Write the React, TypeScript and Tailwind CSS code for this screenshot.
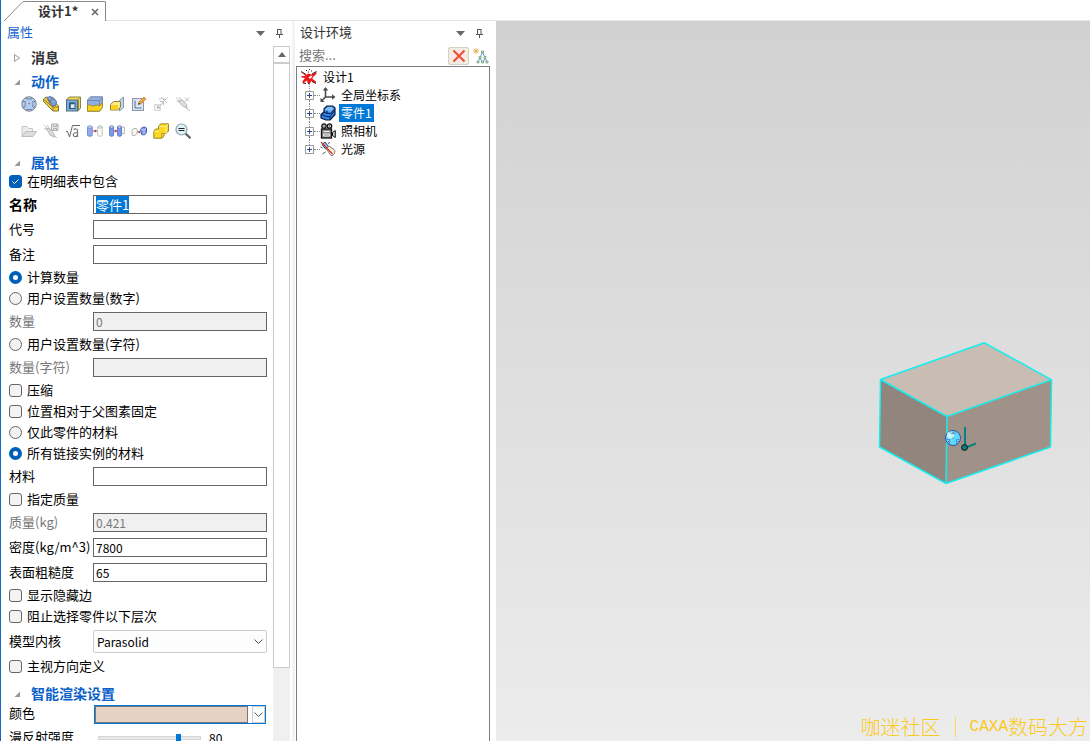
import { useEffect, useId, useRef, useState } from "react";
import type { ReactNode } from "react";

function Svg({ children, className = "size-4" }: { children: ReactNode; className?: string }) {
  return (
    <svg viewBox="0 0 16 16" className={`${className} shrink-0`} fill="none" aria-hidden="true">
      {children}
    </svg>
  );
}

/* Toolbar icons */

const SphereIcon = () => (
  <Svg>
    <circle cx="8" cy="8" r="7.2" fill="#b3cdf0" stroke="#767d8a" />
    <path d="M1.200 5.500h3v5.500h-2.500M14.800 5.500h-3v5.500h2.500M5.500 1.500v1.500h5v-1.500M5.500 14.500v-1h5v1" stroke="#6f7e96" strokeWidth=".9" />
    <rect x="7.500" y="7" width="1.200" height="1.200" fill="#c04040" />
  </Svg>
);

const LongBlockIcon = () => (
  <Svg>
    <path d="M.5 3 3 1l5 1 7.500 8v5h-5.500L.5 5.500z" fill="#f9cf2a" stroke="#7d7440" />
    <path d="M4 2.500 6 .5l4 1 3.500 4-1 4-3.500.5z" fill="#7ea4e6" stroke="#566c9c" />
    <path d="M.5 3.500l9.500 7.500v4M10 11h5.500M6.500 5 9 3l3 .5M5 3l4 4.500" stroke="#6f6a4e" strokeWidth=".8" />
  </Svg>
);

const ShellIcon = () => (
  <Svg>
    <path d="M1.500 4 4 1h11.500v11L13 15z" fill="#f9db50" stroke="#8a8248" />
    <rect x="1.500" y="4" width="11" height="11" fill="#73aede" stroke="#5a6b80" />
    <rect x="4.500" y="7" width="5.500" height="5.500" fill="#ddecf7" stroke="#375775" />
    <path d="M5 12V7.500h4.500" stroke="#2f5878" strokeWidth="1.500" />
    <path d="M12.500 4 15 1.500M13.500 4v10" stroke="#9a9048" />
  </Svg>
);

const SplitBlockIcon = () => (
  <Svg>
    <path d="M.5 4 3.500.8h12v10l-3 4.400H.5z" fill="#8fb0e2" stroke="#7785a0" />
    <path d="M.5 9.500c3-2 4 1.500 6 .5s4-1.500 6 0l3-3.500v5l-3 3.700H.5z" fill="#fbd31c" stroke="#a08d2e" />
    <path d="M.5 4.500h12l3-3.500M12.500 4.500v5.500" stroke="#7588ab" />
  </Svg>
);

const TrimIcon = () => (
  <Svg>
    <path d="M10.500 4.500 14.500 1v10.500l-4 3.500z" fill="#c2d4ee" stroke="#7f97ba" />
    <path d="M1.500 8.500 4.500 5.500h7v5.500l-2.500 3H1.500z" fill="#fbe98a" stroke="#94853a" />
    <path d="M2 9h7v4.500H2z" fill="#fbd31c" />
  </Svg>
);

const SketchIcon = () => (
  <Svg>
    <rect x="1.500" y="2.500" width="11" height="12" fill="#dce5f3" stroke="#8a95a8" />
    <path d="M4 4.500v7.500h6.500" stroke="#56719e" />
    <path d="M7 8.500 8 6l5-5 2 2L9.800 8z" fill="#f0a53a" stroke="#c08040" strokeWidth=".8" />
    <path d="M7 8.500 8 6.500l1.500 1.500z" fill="#444" />
  </Svg>
);

const ScaleIcon = () => (
  <Svg>
    <path d="M1.500 8.500h6v6h-6z" fill="#f7f7f7" stroke="#c6c6c6" strokeDasharray="2 1" />
    <path d="M4.500 12l6-6M7 5.500h3.500V9M6 3.500c2-2 4-2 5.500 0M11 4.500l3.500-2.500M10 3l4 4" stroke="#b8b8b8" />
    <path d="M4.500 9.500V12H7" stroke="#a8a8a8" />
  </Svg>
);

const PinOffIcon = () => (
  <Svg>
    <path d="M1 1.500 15 15M1.500 5l4 1 8 8M4 1.500l3 2.500 5 6" stroke="#c0c0c0" />
    <path d="M4 4.500 7.500 4l4 4.500.5 3-3-.5L5 7.500z" fill="#dedede" stroke="#b8b8b8" />
    <path d="M10 1.500l4 4M14 1.500l-4 4" stroke="#bcbcbc" />
  </Svg>
);

const FolderIcon = () => (
  <Svg>
    <path d="M1 13.500V3.500h5l1.500 2h4v3" fill="#ededed" stroke="#c6c6c6" />
    <path d="M1 13.500 4.500 8.500h11l-3.500 5z" fill="#dcdcdc" stroke="#bebebe" />
  </Svg>
);

const PinSaveIcon = () => (
  <Svg>
    <path d="M.8 2 14 15M1 5.500l4 1.500 7 8M4 2l4 5" stroke="#c0c0c0" />
    <path d="M3.500 5 7 6l4 5v3l-4-2z" fill="#dadada" stroke="#b8b8b8" />
    <path d="M8.500 1h6.500v6.500H8.500z" fill="#e8e8e8" stroke="#b0b0b0" />
    <path d="M10.500 1.500v2h3v-2M10.500 7V5.500h3V7" stroke="#b0b0b0" />
  </Svg>
);

const SqrtIcon = () => (
  <Svg>
    <path d="M1 8.500h1.500l2 5.500L7.500 2.500H15" stroke="#666" />
    <path d="M8.500 6.500c1.500-1 4-.8 4 1.200V14M12.500 9.500c-2 0-4.200.2-4.200 2.300 0 2.500 3.500 2.200 4.200.2" stroke="#777" strokeWidth="1.200" />
  </Svg>
);

const Cylinder = ({ x, w, fill, stroke }: { x: number; w: number; fill: string; stroke: string }) => (
  <>
    <path d={`M${x} 4v8a${w / 2} 1.300 0 0 0 ${w} 0V4`} fill={fill} stroke={stroke} strokeWidth=".8" />
    <ellipse cx={x + w / 2} cy="4" rx={w / 2} ry="1.200" fill="#dbe6fa" stroke={stroke} strokeWidth=".8" />
  </>
);

const LinkCopyIcon = () => (
  <Svg>
    <Cylinder x={0.5} w={4.8} fill="#8fabf2" stroke="#6580c2" />
    <Cylinder x={10.5} w={4.800} fill="#f8f8f4" stroke="#bcbab0" />
    <path d="M6 8h3.500M8 7l1.500 1L8 9z" stroke="#a83a3a" strokeWidth=".9" />
  </Svg>
);

const LinkBothIcon = () => (
  <Svg>
    <path d="M11 4h4.400v6.500h-3" fill="#f8f8f4" stroke="#bcbab0" />
    <Cylinder x={0.6} w={4} fill="#7c9bee" stroke="#4f6cb8" />
    <Cylinder x={8.500} w={4} fill="#7c9bee" stroke="#4f6cb8" />
    <path d="M5 8h2.500M6.500 7l1.300 1-1.300 1z" stroke="#a83a3a" strokeWidth=".9" />
  </Svg>
);

const LinkBreakIcon = () => (
  <Svg>
    <path d="M.8 7.500 2.500 5.500h3l1 1.500-.8 4-2 1.500H1.500z" fill="#f6f6f2" stroke="#b5b3a8" />
    <path d="M9.500 6.500l1.500-2 3-.5 1.500 1v4.500l-2 2.500-3-.5z" fill="#7c9bee" stroke="#4b66b0" />
    <path d="M10 6.500l3 .500 2-2M13 7v4.500" stroke="#c5d4f8" strokeWidth=".8" />
    <path d="M6.500 9H9M8 8l1.200 1L8 10z" stroke="#a83a3a" strokeWidth=".9" />
  </Svg>
);

const StepBlockIcon = () => (
  <Svg>
    <path d="M.8 8.500 2.500 6h3V3L8 .8h7.500V8L13 10.500h-2V13l-2 2.200H.8z" fill="#fcd820" stroke="#9a892c" />
    <path d="M6 3.500h7l2-2.300M13 3.500v6.500M1.500 8.500H6" stroke="#fff0a0" />
    <path d="M8.500 15v-4.500h4.500" stroke="#b8a234" />
  </Svg>
);

const SearchEqIcon = () => (
  <Svg>
    <path d="m10.500 10.500 5 4.800" stroke="#5e5e5e" strokeWidth="2.200" />
    <circle cx="6.500" cy="6.500" r="5.500" fill="#dff3f7" stroke="#8fa3a8" strokeWidth="1.200" />
    <path d="M3.500 5.500h6M3.500 7.500h6" stroke="#222" />
  </Svg>
);

const TOOLS = [
  { label: "定位锚", icon: SphereIcon },
  { label: "编辑零件", icon: LongBlockIcon },
  { label: "抽壳", icon: ShellIcon },
  { label: "分裂零件", icon: SplitBlockIcon },
  { label: "裁剪", icon: TrimIcon },
  { label: "草图", icon: SketchIcon },
  { label: "缩放", icon: ScaleIcon },
  { label: "取消固定", icon: PinOffIcon },
  { label: "打开", icon: FolderIcon },
  { label: "保存", icon: PinSaveIcon },
  { label: "参数表", icon: SqrtIcon },
  { label: "链接复制", icon: LinkCopyIcon },
  { label: "链接", icon: LinkBothIcon },
  { label: "断开链接", icon: LinkBreakIcon },
  { label: "合并", icon: StepBlockIcon },
  { label: "查询", icon: SearchEqIcon },
];

/* Tree icons */

const SceneIcon = () => (
  <Svg>
    <path d="M0 3 5 6l2-1.500 4 1L15.500 3v2L12 8l-.5 2 3.500 2.500v1.500l-4.500-2-2 3-1.500-.5-1-3-3.500 2.500L1 13l3-4-3.500-.5V7L4.500 7z" fill="#f01818" />
    <path d="M0 2.500 5 5.500M15.500 2.500 11 5M5 14.500l-3-.5M15 14.500l-4-2M8.500 15.500l-1.500-2" stroke="#3a0808" />
    <path d="M7.500 8.500 10 6.500l1.500 1L9 10z" fill="#fff" />
    <path d="M5 1.500h1M8 .5h1M10 2h1M7 3h1" stroke="#222" />
  </Svg>
);

const AxesIcon = () => (
  <Svg>
    <path d="M5.500 2.500v7.500H13M5.500 10l-3.500 3.500" stroke="#4a4a4a" strokeWidth="1.600" />
    <path d="M5.500 0 2.800 3.500h5.400zM15.500 10 12 7.300v5.400zM.5 15v-4.200L4.500 15z" fill="#4a4a4a" />
  </Svg>
);

const PartIcon = () => (
  <Svg>
    <path d="M1 9.500 4 7V4L7 1h5.500L15 3v6.500L10 15H6l-5-2z" fill="#2f86e8" stroke="#08163c" strokeWidth="1.200" strokeLinejoin="round" />
    <path d="M4.500 4.500 7.500 2H12l2 1.500L11 6.500H7z" fill="#7fbaf8" />
    <path d="M4 7l3 1.500h4l3.500-4.500M1.500 9.500l4.500 2h4L14.500 6M10 11.500v3M7 5.500v3" stroke="#08163c" strokeWidth=".9" />
  </Svg>
);

const CameraIcon = () => (
  <Svg>
    <circle cx="4" cy="3" r="2.200" fill="#ddd" stroke="#111" strokeWidth="1.300" />
    <circle cx="9.500" cy="3" r="2.200" fill="#ddd" stroke="#111" strokeWidth="1.300" />
    <path d="M3.500 3h1M9 3h1" stroke="#111" />
    <rect x="1.500" y="6" width="10" height="9" fill="#8b8b8b" stroke="#111" strokeWidth="1.300" />
    <path d="M3.500 8.500h6M3.500 11h6v2h-6z" stroke="#eee" />
    <path d="M12.500 9.500 15.300 7.500v7l-2.800-2z" fill="#ccc" stroke="#111" />
  </Svg>
);

const LightIcon = () => (
  <Svg>
    <path d="M2 3.500 5 1l3.500 4.500-3 2.500z" fill="#8fc1ee" stroke="#26466f" />
    <path d="M6 7.500 9 5l5 3.500c2 2 0 6.500-3 6z" fill="#fbe9d5" stroke="#777" />
    <path d="m1 1 11.500 12" stroke="#d9351c" strokeWidth="1.200" />
    <path d="M.5 6 2.500 7M9.500 1 8.500 3M2.500 13l3-2" stroke="#555" />
  </Svg>
);

const FilterTreeIcon = () => (
  <Svg>
    <path d="M3 0v6M0 3h6M1 1l4 4M5 1 1 5" stroke="#e3a83c" strokeWidth=".8" />
    <path d="M9.500 4.500 7 9.500 5 14M9.500 4.500 12 9.500l2 4.500M7 9.500l2 4.500M12 9.500 10.500 14" stroke="#5b8fd0" strokeWidth=".9" />
    <path d="M8.500 3h2v2h-2zM6 8.500h2v2H6zM11 8.500h2v2h-2zM4 13h2v2H4zM8.500 13h2v2h-2zM13 13h2v2h-2z" fill="#d8eed0" stroke="#5d9a73" strokeWidth=".7" />
  </Svg>
);

const TREE = [
  { name: "全局坐标系", icon: AxesIcon },
  { name: "零件1", icon: PartIcon },
  { name: "照相机", icon: CameraIcon },
  { name: "光源", icon: LightIcon },
];

function ChevronIcon() {
  return (
    <svg viewBox="0 0 9 5" className="w-[9px] h-[5px] shrink-0" fill="none" aria-hidden="true">
      <path d="M.5.5l4 4 4-4" stroke="#555" />
    </svg>
  );
}

function PanelHeader({ title, titleClass }: { title: string; titleClass: string }) {
  return (
    <div className="flex h-6 items-center">
      <h2 className={`flex-1 pb-0.5 text-[13px] leading-5 ${titleClass}`}>{title}</h2>
      <button type="button" aria-label={`${title}菜单`} className="flex w-5 justify-center">
        <svg viewBox="0 0 9 5" className="w-[9px] h-[5px]" aria-hidden="true">
          <path d="M0 0h9L4.500 5z" fill="#666" />
        </svg>
      </button>
      <button type="button" aria-label={`固定${title}`} className="flex w-[19px] justify-center">
        <svg viewBox="0 0 7 9" className="w-[7px] h-[9px]" fill="none" aria-hidden="true">
          <path d="M1.500 0v5.500M5 0v5.500M1.500.5H5M0 5.500h7M3.500 6v3" stroke="#555" />
        </svg>
      </button>
    </div>
  );
}

function Section({ title, open = true, className = "" }: { title: string; open?: boolean; className?: string }) {
  return (
    <h3 className={`flex items-center text-sm leading-4 font-bold ${className}`}>
      <button type="button" aria-expanded={open} className="flex items-center gap-2.5 pl-1">
        <svg viewBox="0 0 8 8" className="size-2" aria-hidden="true">
          {open ? <path d="M7 1.500v5.500H1.500z" fill="#999" /> : <path d="M1.500.5v7L6.500 4z" fill="none" stroke="#999" />}
        </svg>
        <span className={`pb-0.5 ${open ? "text-[#0a5fc8]" : "text-[#333]"}`}>{title}</span>
      </button>
    </h3>
  );
}

function CheckRow({ label, checked = false }: { label: string; checked?: boolean }) {
  return (
    <label className="flex h-[21px] items-center gap-[5px]">
      <span className="grid size-[13px]">
        <input
          type="checkbox"
          defaultChecked={checked}
          className="peer col-start-1 row-start-1 size-[13px] appearance-none rounded-[3px] border border-[#666] bg-[#f3f3f3] checked:border-[#005fb8] checked:bg-[#005fb8]"
        />
        <svg viewBox="0 0 13 13" className="pointer-events-none invisible col-start-1 row-start-1 size-[13px] peer-checked:visible" fill="none" aria-hidden="true">
          <path d="M3.500 6.500l2 2 4-4" stroke="#fff" />
        </svg>
      </span>
      <span className="pb-0.5">{label}</span>
    </label>
  );
}

function RadioRow({ label, name, checked = false }: { label: string; name: string; checked?: boolean }) {
  return (
    <label className="flex h-[21px] items-center gap-[5px]">
      <input
        type="radio"
        name={name}
        defaultChecked={checked}
        className="size-[13px] appearance-none rounded-full border border-[#666] bg-[#f3f3f3] checked:border-4 checked:border-[#005fb8] checked:bg-white"
      />
      <span className="pb-0.5">{label}</span>
    </label>
  );
}

type FieldRowProps = {
  label: string;
  value?: string;
  disabled?: boolean;
  primary?: boolean;
};

function FieldRow({ label, value = "", disabled = false, primary = false }: FieldRowProps) {
  const id = useId();
  const ref = useRef<HTMLInputElement>(null);

  useEffect(() => {
    if (primary) {
      ref.current?.focus();
      ref.current?.select();
    }
  }, [primary]);

  return (
    <div className="flex h-[25px] items-center">
      <label htmlFor={id} className={`w-[84px] shrink-0 pb-0.5 whitespace-nowrap ${primary ? "text-sm leading-4 font-bold" : ""} ${disabled ? "text-[#777]" : ""}`}>
        {label}
      </label>
      <input
        ref={ref}
        id={id}
        defaultValue={value}
        disabled={disabled}
        className={`h-[19px] min-w-0 flex-1 border border-[#666] px-0.5 pb-px leading-4 outline-none selection:bg-[#0078d7] selection:text-white disabled:bg-[#f0f0f0] disabled:text-[#777] ${primary ? "text-[13px]" : "text-xs"}`}
      />
    </div>
  );
}

function PropertiesPanel() {
  const [diffuse, setDiffuse] = useState(80);

  return (
    <aside className="flex w-[291px] shrink-0 flex-col overflow-hidden text-[13px] leading-4">
      <div className="pr-[3px] pl-1.5">
        <PanelHeader title="属性" titleClass="text-[#1a66cc]" />
      </div>
      <div className="flex min-h-0 flex-1 pt-px pr-0.5">
        <div className="min-w-0 flex-1 overflow-hidden pr-1.5 pl-2">
          <Section title="消息" open={false} className="h-6" />
          <Section title="动作" className="h-6" />
          <div className="grid w-fit grid-cols-8 gap-x-1.5 gap-y-[11px] pt-0.5 pl-3">
            {TOOLS.map(({ label, icon: Icon }) => (
              <button key={label} type="button" aria-label={label}>
                <Icon />
              </button>
            ))}
          </div>

          <Section title="属性" className="mt-4 h-4" />
          <CheckRow label="在明细表中包含" checked />
          <FieldRow label="名称" value="零件1" primary />
          <FieldRow label="代号" />
          <FieldRow label="备注" />
          <RadioRow name="quantity" label="计算数量" checked />
          <RadioRow name="quantity" label="用户设置数量(数字)" />
          <FieldRow label="数量" value="0" disabled />
          <RadioRow name="quantity" label="用户设置数量(字符)" />
          <FieldRow label="数量(字符)" disabled />
          <CheckRow label="压缩" />
          <CheckRow label="位置相对于父图素固定" />
          <RadioRow name="material" label="仅此零件的材料" />
          <RadioRow name="material" label="所有链接实例的材料" checked />
          <FieldRow label="材料" />
          <CheckRow label="指定质量" />
          <FieldRow label="质量(kg)" value="0.421" disabled />
          <FieldRow label="密度(kg/m^3)" value="7800" />
          <FieldRow label="表面粗糙度" value="65" />
          <CheckRow label="显示隐藏边" />
          <CheckRow label="阻止选择零件以下层次" />
          <div className="flex h-[29px] items-center">
            <label htmlFor="kernel" className="w-[84px] shrink-0 pb-0.5">模型内核</label>
            <div className="grid min-w-0 flex-1 items-center">
              <select id="kernel" className="col-start-1 row-start-1 h-[23px] appearance-none rounded-xs border border-[#ccc] bg-[#fdfdfd] px-[3px] text-xs">
                <option>Parasolid</option>
                <option>ACIS</option>
              </select>
              <span className="pointer-events-none col-start-1 row-start-1 justify-self-end pr-1">
                <ChevronIcon />
              </span>
            </div>
          </div>
          <CheckRow label="主视方向定义" />

          <Section title="智能渲染设置" className="mt-[9px] h-4" />
          <div className="flex h-6 items-center">
            <span className="w-[85px] shrink-0 pb-0.5">颜色</span>
            <button type="button" aria-label="颜色" className="mr-px flex h-[19px] flex-1 border border-[#0078d7] bg-white">
              <span className="h-full flex-1 border border-[#777] bg-[#e6d2c5]" />
              <span className="ml-1 flex h-full w-[13px] items-center justify-center border border-[#ccc]">
                <ChevronIcon />
              </span>
            </button>
          </div>
          <div className="flex h-6 items-center">
            <label htmlFor="diffuse" className="w-[89px] shrink-0 pb-0.5">漫反射强度</label>
            <input
              id="diffuse"
              type="range"
              value={diffuse}
              onChange={(e) => setDiffuse(Number(e.target.value))}
              className="h-1 w-[103px] appearance-none border border-[#d6d6d6] bg-[#e7eaea] [&::-webkit-slider-thumb]:h-2 [&::-webkit-slider-thumb]:w-[5px] [&::-webkit-slider-thumb]:appearance-none [&::-webkit-slider-thumb]:bg-[#0078d7]"
            />
            <output htmlFor="diffuse" className="pl-2 text-xs">{diffuse}</output>
          </div>
        </div>

        {/* Scrollbar */}
        <div className="flex w-[17px] shrink-0 flex-col bg-[#f0f0f0]">
          <button type="button" aria-label="向上滚动" className="flex h-[17px] shrink-0 items-center justify-center border border-[#ccc] bg-white">
            <svg viewBox="0 0 8 5" className="w-2 h-[5px]" aria-hidden="true">
              <path d="M0 5h8L4 0z" fill="#666" />
            </svg>
          </button>
          <div className="h-[87%] border border-[#ccc] bg-white" />
        </div>
      </div>
    </aside>
  );
}

function ScenePanel() {
  const [selected, setSelected] = useState("零件1");

  return (
    <aside className="flex w-[201px] shrink-0 flex-col pl-px text-xs">
      <div className="pr-[7px] pl-1">
        <PanelHeader title="设计环境" titleClass="text-[#333]" />
      </div>
      <div className="flex h-[21px] items-center gap-1 pr-[7px] pl-[3px]">
        <input aria-label="搜索" placeholder="搜索..." className="min-w-0 flex-1 pb-0.5 text-[13px] outline-none placeholder:text-[#777]" />
        <button type="button" aria-label="清除" className="flex h-[18px] w-[21px] items-center justify-center rounded-xs border border-[#d8d0c4] bg-[#f3ece2]">
          <svg viewBox="0 0 14 14" className="size-3.5" fill="none" aria-hidden="true">
            <path d="M1.500 1.500 12.500 12.500M12.500 1.500 1.500 12.500" stroke="#f04a36" strokeWidth="2" />
          </svg>
        </button>
        <button type="button" aria-label="筛选">
          <FilterTreeIcon />
        </button>
      </div>
      <div className="mr-1.5 flex-1 border border-b-0 border-[#7a7d85] px-1 pt-px">
        <div className="flex h-[18px] items-center gap-1.5">
          <SceneIcon />
          <span className="pb-px">设计1</span>
        </div>
        <ul className="pl-1">
          {TREE.map(({ name, icon: Icon }, i) => (
            <li key={name} className="flex h-[18px] items-center">
              <div className="flex h-full w-[9px] flex-col items-center">
                <span className="w-0 flex-1 border-l border-dotted border-[#888]" />
                <button type="button" aria-label={`展开${name}`}>
                  <svg viewBox="0 0 9 9" className="size-[9px]" fill="#fff" aria-hidden="true">
                    <path d="M.5.5h8v8h-8z" stroke="#999" />
                    <path d="M2 4.500h5M4.500 2v5" stroke="#2b4a8b" />
                  </svg>
                </button>
                <span className={`w-0 flex-1 border-l border-dotted ${i < TREE.length - 1 ? "border-[#888]" : "border-transparent"}`} />
              </div>
              <span className="w-1.5 border-t border-dotted border-[#888]" />
              <Icon />
              <button
                type="button"
                onClick={() => setSelected(name)}
                className={`ml-[3px] h-[18px] px-0.5 pb-px ${selected === name ? "bg-[#0078d7] text-white" : ""}`}
              >
                {name}
              </button>
            </li>
          ))}
        </ul>
      </div>
    </aside>
  );
}

function Viewport() {
  return (
    <main className="relative min-w-0 flex-1 overflow-hidden bg-linear-to-b from-[#d1d1d1] to-[#ececec]">
      <svg viewBox="0 0 176 144" className="absolute top-[321px] right-[37px] h-36 w-44" fill="none" aria-label="零件1">
        <path d="M3.500 37.500 107.500.8l67 37L70 74.500z" fill="#c9bcb2" />
        <path d="M3.500 37.500 70 74.500 69 141.500 2.500 105z" fill="#91857d" />
        <path d="M70 74.500l104.500-36.700-1 67.200L69 141.500z" fill="#a09288" />
        <path
          d="M3.500 37.500 107.500.8l67 37L70 74.500zM3.500 37.500l-1 67.500L69 141.500l104.500-36.500 1-67.200M70 74.500l-1 67"
          stroke="#14eeee"
          strokeWidth="1.500"
          strokeLinejoin="round"
        />
        <circle cx="76" cy="96" r="7.500" fill="#58dcfa" stroke="#3a4ea8" />
        <circle cx="73.500" cy="93" r="3.500" fill="#c8f4fd" />
        <path d="M73 89.500c0 3 6 3 6 0M69.500 97.500h3v4.500M82.500 97.500h-3v4.500" stroke="#4a90e8" />
        <path d="M75.500 95.500h1v1h-1zM75.500 90h1v1h-1zM71 99h1v1h-1zM80.500 99h1v1h-1z" fill="#d02525" />
        <path d="M88 106V85M88 106l11-4.500" stroke="#0b8080" strokeWidth="2" />
        <circle cx="87.500" cy="105.500" r="2.900" fill="#0b8080" stroke="#111" />
      </svg>
      <p className="absolute right-0.5 bottom-0 flex h-7 items-center gap-3.5 text-xl font-light whitespace-nowrap text-[#fbc91a]">
        <span>咖迷社区</span>
        <span className="h-5 w-px bg-[#fbd75a]" />
        <span className="flex items-center">
          <span className="font-['Liberation_Mono'] text-base">CAXA</span>
          数码大方
        </span>
      </p>
    </main>
  );
}

export default function App() {
  return (
    <div className="flex h-screen flex-col overflow-hidden border-l border-[#1464c8] bg-white font-['Noto_Sans_CJK_SC',sans-serif] text-black">
      <div className="flex h-[21px] shrink-0 items-end pt-px pl-[3px]">
        <svg viewBox="0 0 20 20" className="size-5" fill="none" aria-hidden="true">
          <path d="M0 20 19 .5h1" stroke="#888" />
        </svg>
        <div className="flex h-5 items-center rounded-tr-xs border-t border-r border-[#888] pr-1.5 pl-3.5">
          <span className="pb-0.5 text-[13px] leading-4 font-bold text-[#333]">设计1*</span>
          <button type="button" aria-label="关闭" className="ml-[13px]">
            <svg viewBox="0 0 8 8" className="size-2" fill="none" aria-hidden="true">
              <path d="M1 1l6 6M7 1 1 7" stroke="#666" strokeWidth="1.500" />
            </svg>
          </button>
        </div>
        <div className="flex-1 self-stretch border-b border-[#e5e5e5]" />
      </div>
      <div className="flex min-h-0 flex-1">
        <PropertiesPanel />
        <div className="w-[3px] shrink-0 bg-[#f3f3f3]" />
        <ScenePanel />
        <Viewport />
      </div>
    </div>
  );
}
